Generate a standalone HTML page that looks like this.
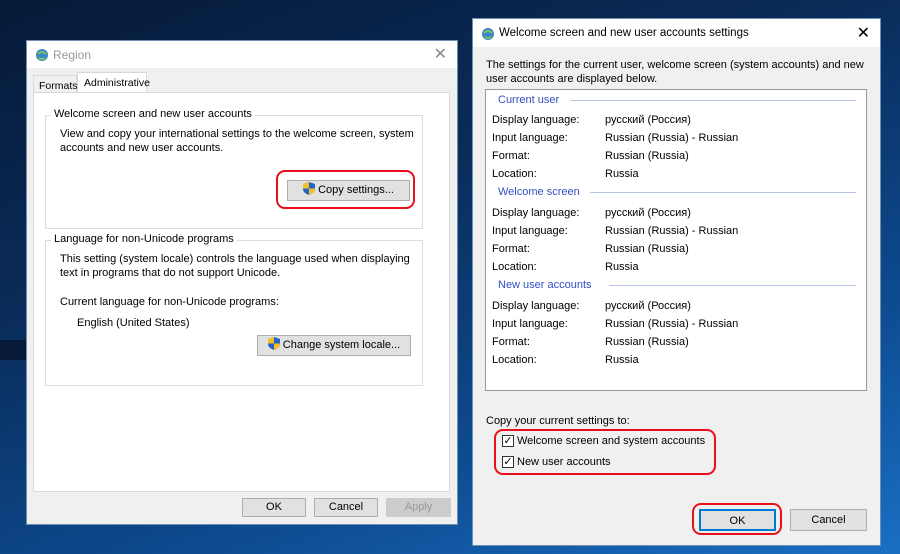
<!DOCTYPE html>
<html><head><style>
*{box-sizing:border-box;margin:0;padding:0}
body{width:900px;height:554px;overflow:hidden;position:relative;font-family:"Liberation Sans","DejaVu Sans",sans-serif;font-size:11px;color:#000;
background:linear-gradient(160deg,#061a38 0%,#0a2b58 35%,#0d4a8f 70%,#1a6fc4 100%)}
.a{position:absolute}
.win{position:absolute;background:#f0f0f0;border:1px solid #6f8fb0}
.title{position:absolute;left:0;right:0;top:0;background:#fff}
.btn{position:absolute;background:#e1e1e1;border:1px solid #adadad;text-align:center;font-size:11px}
.red{position:absolute;border:2.5px solid #e8101a;border-radius:9px}
.grp{position:absolute;border:1px solid #dcdcdc}
.gl{position:absolute;background:#fff;padding:0 3px;left:5px;top:-8px}
.sh{display:inline-block;width:12px;height:13px;vertical-align:-2px;margin-right:3px}
.cb{position:absolute;width:12px;height:12px;border:1px solid #333;background:#fff;font-size:11px;line-height:10px;text-align:center}
.hd{position:absolute;color:#3050c0;left:12px}
.hl{position:absolute;height:1px;background:#b8c4e8;right:10px}
</style></head><body>
<div class="a" style="left:0;top:340px;width:30px;height:20px;background:#061a38"></div>

<!-- Left window -->
<div class="win" style="left:26px;top:40px;width:432px;height:485px">
 <div class="title" style="height:27px">
  <svg class="a" style="left:7px;top:5px" width="16" height="16"><circle cx="8" cy="9" r="6" fill="#3a86c8"/><path d="M4 8q4-4 8 0M5 12q3 2 6 0" stroke="#7fc060" stroke-width="2" fill="none"/></svg>
  <div class="a" style="left:26px;top:7px;color:#999;font-size:12px">Region</div>
  <div class="a" style="right:10px;top:3px;color:#888;font-size:16px">✕</div>
 </div>
 <div class="a" style="left:6px;top:34px;width:44px;height:18px;border:1px solid #d9d9d9;border-bottom:none;padding:4px 0 0 5px;font-size:10.5px">Formats</div>
 <div class="a" style="left:50px;top:31px;width:70px;height:21px;background:#fff;border:1px solid #d9d9d9;border-bottom:none;padding:4px 0 0 6px;font-size:10.5px">Administrative</div>
 <div class="a" style="left:6px;top:51px;width:417px;height:400px;background:#fff;border:1px solid #d9d9d9">
  <div class="grp" style="left:11px;top:22px;width:378px;height:114px">
   <div class="gl">Welcome screen and new user accounts</div>
   <div class="a" style="left:14px;top:12px;width:360px;line-height:13.5px">View and copy your international settings to the welcome screen, system accounts and new user accounts.</div>
   <div class="btn" style="left:241px;top:64px;width:123px;height:21px;line-height:19px"><svg class="sh" viewBox="0 0 12 13"><path d="M6 0L12 2V7Q12 11 6 13Q0 11 0 7V2Z" fill="#2563c8"/><path d="M6 0V6.5H0V2ZM6 6.5H12V7Q12 11 6 13Z" fill="#f3c222"/></svg>Copy settings...</div>
  </div>
  <div class="grp" style="left:11px;top:147px;width:378px;height:146px">
   <div class="gl">Language for non-Unicode programs</div>
   <div class="a" style="left:14px;top:12px;width:360px;line-height:13.5px">This setting (system locale) controls the language used when displaying text in programs that do not support Unicode.</div>
   <div class="a" style="left:14px;top:55px">Current language for non-Unicode programs:</div>
   <div class="a" style="left:31px;top:76px">English (United States)</div>
   <div class="btn" style="left:211px;top:94px;width:154px;height:21px;line-height:19px"><svg class="sh" viewBox="0 0 12 13"><path d="M6 0L12 2V7Q12 11 6 13Q0 11 0 7V2Z" fill="#2563c8"/><path d="M6 0V6.5H0V2ZM6 6.5H12V7Q12 11 6 13Z" fill="#f3c222"/></svg>Change system locale...</div>
  </div>
 </div>
 <div class="btn" style="left:215px;top:457px;width:64px;height:19px;line-height:17px">OK</div>
 <div class="btn" style="left:287px;top:457px;width:64px;height:19px;line-height:17px">Cancel</div>
 <div class="btn" style="left:359px;top:457px;width:65px;height:19px;line-height:17px;color:#999;border-color:#ccc;background:#ccc">Apply</div>
</div>
<div class="red" style="left:276px;top:170px;width:139px;height:39px"></div>

<!-- Right window -->
<div class="win" style="left:472px;top:18px;width:409px;height:528px">
 <div class="title" style="height:28px">
  <svg class="a" style="left:7px;top:6px" width="16" height="16"><circle cx="8" cy="9" r="6" fill="#3a86c8"/><path d="M4 8q4-4 8 0M5 12q3 2 6 0" stroke="#7fc060" stroke-width="2" fill="none"/></svg>
  <div class="a" style="left:26px;top:8px;font-size:11.5px">Welcome screen and new user accounts settings</div>
  <div class="a" style="right:10px;top:4px;font-size:16px">✕</div>
 </div>
 <div class="a" style="left:13px;top:39px;width:380px;line-height:14px">The settings for the current user, welcome screen (system accounts) and new user accounts are displayed below.</div>
 <div class="a" style="left:12px;top:70px;width:382px;height:302px;background:#fff;border:1px solid #999">
  <div class="hd" style="top:4px">Current user</div><div class="hl" style="left:84px;top:10px"></div>
  <div class="a" style="left:6px;top:21px;line-height:18px">Display language:<br>Input language:<br>Format:<br>Location:</div>
  <div class="a" style="left:119px;top:21px;line-height:18px">русский (Россия)<br>Russian (Russia) - Russian<br>Russian (Russia)<br>Russia</div>
  <div class="hd" style="top:96px">Welcome screen</div><div class="hl" style="left:104px;top:102px"></div>
  <div class="a" style="left:6px;top:114px;line-height:18px">Display language:<br>Input language:<br>Format:<br>Location:</div>
  <div class="a" style="left:119px;top:114px;line-height:18px">русский (Россия)<br>Russian (Russia) - Russian<br>Russian (Russia)<br>Russia</div>
  <div class="hd" style="top:189px">New user accounts</div><div class="hl" style="left:123px;top:195px"></div>
  <div class="a" style="left:6px;top:207px;line-height:18px">Display language:<br>Input language:<br>Format:<br>Location:</div>
  <div class="a" style="left:119px;top:207px;line-height:18px">русский (Россия)<br>Russian (Russia) - Russian<br>Russian (Russia)<br>Russia</div>
 </div>
 <div class="a" style="left:13px;top:396px">Copy your current settings to:</div>
 <div class="cb" style="left:29px;top:416px">✓</div><div class="a" style="left:44px;top:416px">Welcome screen and system accounts</div>
 <div class="cb" style="left:29px;top:437px">✓</div><div class="a" style="left:44px;top:437px">New user accounts</div>
 <div class="btn" style="left:226px;top:490px;width:77px;height:22px;line-height:20px;border:2px solid #0078d7">OK</div>
 <div class="btn" style="left:317px;top:490px;width:77px;height:22px;line-height:20px">Cancel</div>
</div>
<div class="red" style="left:494px;top:429px;width:222px;height:46px"></div>
<div class="red" style="left:692px;top:503px;width:90px;height:32px"></div>
</body></html>
